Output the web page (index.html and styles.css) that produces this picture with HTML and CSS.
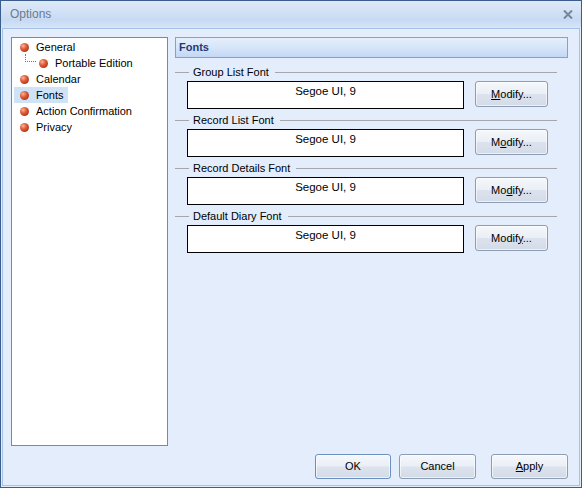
FILE: index.html
```html
<!DOCTYPE html>
<html>
<head>
<meta charset="utf-8">
<link rel="stylesheet" href="styles.css">
</head>
<body>
<div class="window">
  <div class="titlebar">
    <span class="title">Options</span>
    <svg class="close" width="10" height="9" viewBox="0 0 10 9"><path d="M1 0.5 L9 8.5 M9 0.5 L1 8.5" stroke="#76859a" stroke-width="2" fill="none"/></svg>
  </div>
  <div class="client">
    <div class="main">
      <div class="tree">
        <div class="node"><span class="dot"></span>General</div>
        <div class="node child"><span class="branch"></span><span class="dot"></span>Portable Edition</div>
        <div class="node"><span class="dot"></span>Calendar</div>
        <div class="node selected"><span class="dot"></span>Fonts</div>
        <div class="node"><span class="dot"></span>Action Confirmation</div>
        <div class="node"><span class="dot"></span>Privacy</div>
      </div>
      <div class="page">
        <div class="page-header">Fonts</div>
        <div class="group">
          <div class="legend"><span class="legend-text">Group List Font</span></div>
          <div class="group-row"><div class="font-box">Segoe UI, 9</div><button class="btn modify"><u>M</u>odify...</button></div>
        </div>
        <div class="group">
          <div class="legend"><span class="legend-text">Record List Font</span></div>
          <div class="group-row"><div class="font-box">Segoe UI, 9</div><button class="btn modify">M<u>o</u>dify...</button></div>
        </div>
        <div class="group">
          <div class="legend"><span class="legend-text">Record Details Font</span></div>
          <div class="group-row"><div class="font-box">Segoe UI, 9</div><button class="btn modify">Mo<u>d</u>ify...</button></div>
        </div>
        <div class="group">
          <div class="legend"><span class="legend-text">Default Diary Font</span></div>
          <div class="group-row"><div class="font-box">Segoe UI, 9</div><button class="btn modify">Modif<u>y</u>...</button></div>
        </div>
      </div>
    </div>
    <div class="buttons">
      <button class="btn ok default">OK</button>
      <button class="btn cancel">Cancel</button>
      <button class="btn apply"><u>A</u>pply</button>
    </div>
  </div>
</div>
</body>
</html>
```

FILE: styles.css
```css
* { box-sizing: border-box; }
html, body { margin: 0; padding: 0; }
body {
  font-family: "Liberation Sans", Arial, sans-serif;
  font-size: 11px;
  color: #000;
  background: #e3edfb;
}
.window {
  width: 582px;
  height: 488px;
  border: 1px solid #3a5d8c;
  background: #e3edfb;
  display: flex;
  flex-direction: column;
}
.titlebar {
  height: 27px;
  flex: none;
  display: flex;
  align-items: center;
  justify-content: space-between;
  padding: 0 8px 1px 9px;
  background: linear-gradient(to bottom, #dfeaf8 0%, #d3e2f6 35%, #c7daf3 70%, #d6e5f8 100%);
}
.title {
  font-family: "Liberation Sans", Arial, sans-serif;
  font-size: 12px;
  color: #6c7a8e;
}
.close { display: block; }
.client {
  flex: 1;
  margin: 0 1px 1px 1px;
  border: 1px solid #a6c2e8;
  background: #e3edfb;
  padding: 8px 11px 6px 8px;
  display: flex;
  flex-direction: column;
}
.main {
  height: 409px;
  display: flex;
  gap: 7px;
}
.tree {
  width: 157px;
  height: 409px;
  background: #fff;
  border: 1px solid #828790;
  padding: 1px 0 0 2px;
  display: flex;
  flex-direction: column;
  align-items: flex-start;
}
.node {
  height: 16px;
  display: flex;
  align-items: center;
  padding-right: 4px;
  white-space: nowrap;
}
.node.selected { background: #cfe3f7; }
.dot {
  width: 9px;
  height: 9px;
  border-radius: 50%;
  margin: 0 7px 0 6px;
  background: radial-gradient(circle at 35% 32%, #f9b89c 0%, #e2643f 35%, #c2401d 65%, #8b2a12 100%);
  flex: none;
}
.branch {
  align-self: flex-start;
  width: 11px;
  height: 8px;
  margin-left: 11px;
  margin-top: -1px;
  border-left: 1px dotted #7a7a7a;
  border-bottom: 1px dotted #7a7a7a;
  flex: none;
}
.child .dot { margin-left: 3px; }
.page {
  width: 393px;
  display: flex;
  flex-direction: column;
}
.page-header {
  height: 21px;
  border: 1px solid #7ea2d2;
  background: linear-gradient(to bottom, #e6effc 0%, #d6e5f9 50%, #c3d8f5 100%);
  color: #1d3a78;
  font-weight: bold;
  font-size: 11px;
  padding: 3px 0 0 3px;
}
.group { margin-top: 6px; }
.group + .group { margin-top: 3px; }
.legend {
  height: 16px;
  display: flex;
  align-items: center;
  margin-right: 11px;
}
.legend::before {
  content: "";
  width: 14px;
  border-top: 1px solid #a5a9ae;
}
.legend::after {
  content: "";
  flex: 1;
  border-top: 1px solid #a5a9ae;
}
.legend-text { padding: 0 6px 0 4px; }
.group-row {
  display: flex;
  align-items: flex-start;
  margin-top: 1px;
  padding-left: 12px;
}
.font-box {
  width: 277px;
  height: 28px;
  border: 1px solid #000;
  background: #fff;
  text-align: center;
  padding-top: 3px;
  font-size: 11.5px;
}
.btn {
  font-family: "Liberation Sans", Arial, sans-serif;
  font-size: 11px;
  color: #000;
  border: 1px solid #8c9cb3;
  border-radius: 3px;
  background: linear-gradient(to bottom, #f5f8fc 0%, #eaeff6 48%, #dce3ed 52%, #d3dbe7 100%);
  padding: 0 0 1px 0;
  box-shadow: inset 0 0 0 1px rgba(255,255,255,0.6);
}
.modify {
  width: 73px;
  height: 26px;
  margin-left: 11px;
}
.buttons {
  margin-top: 8px;
  display: flex;
  justify-content: flex-end;
}
.buttons .btn { height: 25px; width: 77px; padding-bottom: 2px; }
.buttons .ok { width: 76px; }
.buttons .cancel { margin-left: 8px; }
.buttons .apply { margin-left: 15px; }
.btn.default { border-color: #6b8fc2; }
```
